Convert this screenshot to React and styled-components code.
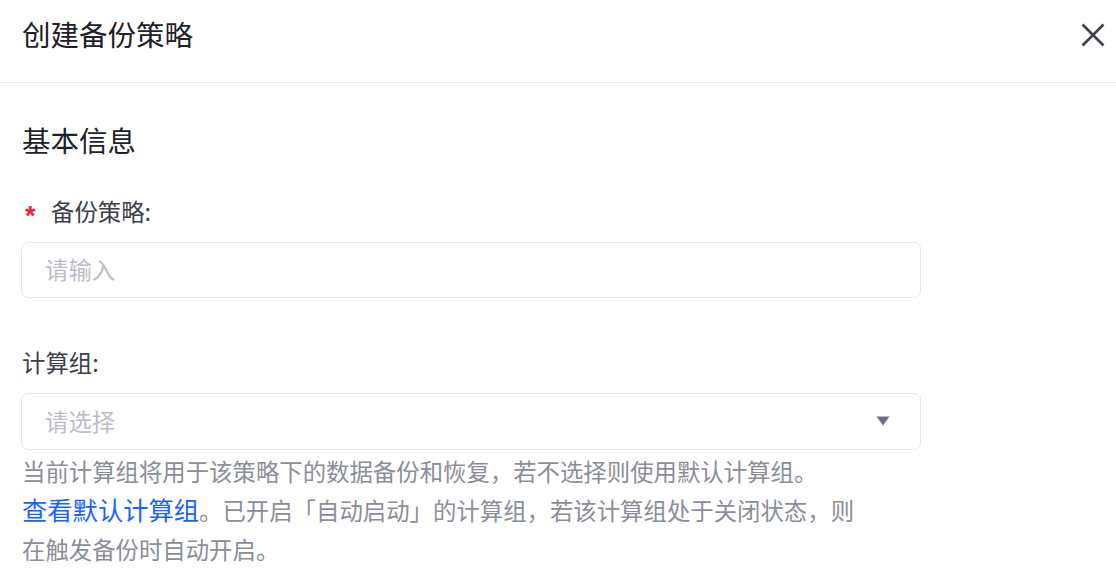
import React from "react";
import styled, { createGlobalStyle } from "styled-components";

const Global = createGlobalStyle`
  html, body { margin: 0; padding: 0; background: #fff; }
  body {
    font-family: "Noto Sans CJK SC", "Noto Sans", sans-serif;
    -webkit-font-smoothing: antialiased;
  }
  * { box-sizing: border-box; }
`;

const Drawer = styled.div`
  width: 1116px;
  height: 574px;
  overflow: hidden;
  background: #fff;
`;

const Header = styled.header`
  height: 83px;
  padding: 14px 8px 0 22px;
  display: flex;
  align-items: flex-start;
  justify-content: space-between;
  border-bottom: 1px solid #e8e8ea;
`;

const Title = styled.h1`
  margin: 0;
  font-size: 28.5px;
  line-height: 40px;
  font-weight: 400;
  color: #1d2129;
`;

const CloseButton = styled.button`
  width: 30px;
  height: 30px;
  margin-top: 6px;
  padding: 0;
  border: 0;
  background: transparent;
  display: flex;
  align-items: center;
  justify-content: center;
  cursor: pointer;
`;

const Body = styled.div`
  padding: 37px 22px 0 21px;
  display: flex;
  flex-direction: column;
`;

const SectionTitle = styled.h2`
  margin: 0 0 0 1px;
  font-size: 28.5px;
  line-height: 40px;
  font-weight: 400;
  color: #1d2129;
`;

const Field = styled.div`
  display: flex;
  flex-direction: column;
  margin-top: ${(p) => p.$top}px;
`;

const Label = styled.label`
  display: flex;
  align-items: center;
  height: 32px;
  font-size: 23.4px;
  color: #3c4049;
  margin-left: 1px;
`;

const Star = styled.span`
  color: #f5222d;
  font-family: "Liberation Sans", sans-serif;
  font-weight: 700;
  font-size: 27px;
  width: 26px;
  margin-left: 3px;
  line-height: 1;
  position: relative;
  top: 5px;
`;

const Control = styled.div`
  margin-top: 15px;
  width: 900px;
  height: ${(p) => p.$h}px;
  border: 1px solid #e6e7ec;
  border-radius: 7px;
  display: flex;
  align-items: center;
  justify-content: space-between;
  padding: 0 30px 2px 23px;
  font-size: 23.4px;
  color: #b9bdc6;
  background: #fff;
`;

const Help = styled.div`
  margin: 2px 0 0 1px;
  max-width: 845px;
  font-size: 23.4px;
  line-height: 39px;
  color: #8a8e98;
`;

const Link = styled.a`
  color: #1664ff;
  font-size: 25.3px;
  line-height: 1;
  text-decoration: none;
  cursor: pointer;
`;

export default function App() {
  return (
    <>
      <Global />
      <Drawer>
        <Header>
          <Title>创建备份策略</Title>
          <CloseButton aria-label="关闭">
            <svg width="24" height="24" viewBox="0 0 24 24">
              <path
                d="M1.5 1.5 L22.5 22.5 M22.5 1.5 L1.5 22.5"
                stroke="#3d424c"
                strokeWidth="2.6"
                strokeLinecap="butt"
                fill="none"
              />
            </svg>
          </CloseButton>
        </Header>
        <Body>
          <SectionTitle>基本信息</SectionTitle>
          <Field $top={35}>
            <Label>
              <Star>*</Star>
              备份策略:
            </Label>
            <Control $h={56}>请输入</Control>
          </Field>
          <Field $top={48}>
            <Label>计算组:</Label>
            <Control $h={57}>
              <span>请选择</span>
              <svg width="14" height="10" viewBox="0 0 14 10">
                <path d="M0.5 0.5 H13.5 L7 9.5 Z" fill="#6b7080" />
              </svg>
            </Control>
            <Help>
              当前计算组将用于该策略下的数据备份和恢复，若不选择则使用默认计算组。
              <br />
              <Link>查看默认计算组</Link>
              。已开启「自动启动」的计算组，若该计算组处于关闭状态，则在触发备份时自动开启。
            </Help>
          </Field>
        </Body>
      </Drawer>
    </>
  );
}
